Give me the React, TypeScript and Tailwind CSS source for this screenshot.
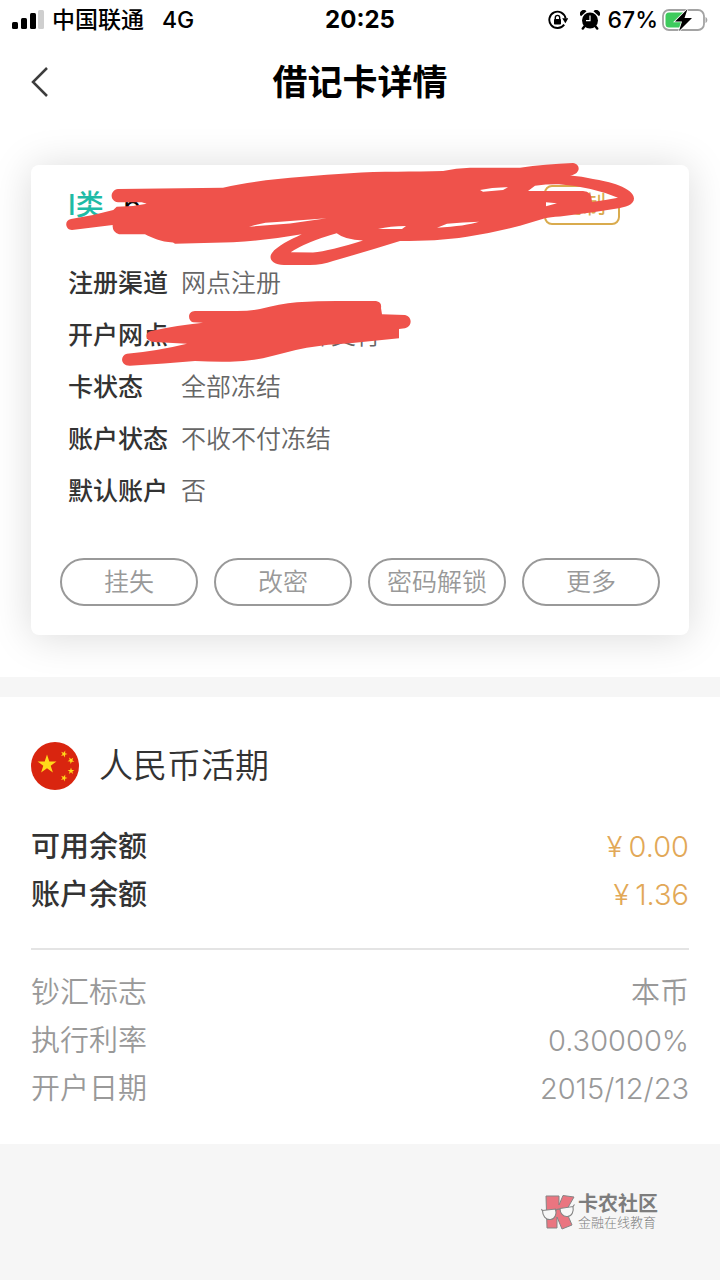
const cardInfo = [
  { label: "注册渠道", value: "网点注册" },
  { label: "开户网点", value: "　　　　　部支行" },
  { label: "卡状态", value: "全部冻结" },
  { label: "账户状态", value: "不收不付冻结" },
  { label: "默认账户", value: "否" },
];

const actions = ["挂失", "改密", "密码解锁", "更多"];

const balances = [
  { label: "可用余额", value: "0.00" },
  { label: "账户余额", value: "1.36" },
];

const details = [
  { label: "钞汇标志", value: "本币" },
  { label: "执行利率", value: "0.30000%" },
  { label: "开户日期", value: "2015/12/23" },
];

function SignalIcon() {
  return (
    <svg className="w-8 h-5" viewBox="0 0 32 20" aria-hidden="true">
      <rect x="0" y="12" width="6" height="7" rx="1.5" />
      <rect x="9" y="8" width="6" height="11" rx="1.5" />
      <rect x="18" y="3" width="6" height="16" rx="1.5" />
      <rect x="26" y="0" width="6" height="19" rx="1.5" fill="#cfcfcf" />
    </svg>
  );
}

function RotationLockIcon() {
  return (
    <svg className="w-5 h-5" viewBox="0 0 20 20" aria-hidden="true">
      <path d="M16.2 14.6A8.2 8.2 0 1 1 17.6 8.5" fill="none" stroke="black" strokeWidth="1.9" />
      <path d="M14.2 8.2h6.2l-3 5z" />
      <rect x="6" y="9" width="7" height="5.5" rx="0.8" />
      <path d="M7.3 9.5V7.6a2.2 2.2 0 0 1 4.4 0v1.9" fill="none" stroke="black" strokeWidth="1.4" />
    </svg>
  );
}

function AlarmIcon() {
  return (
    <svg className="w-5 h-5" viewBox="0 0 20 20" aria-hidden="true">
      <circle cx="10" cy="10.5" r="8" />
      <path d="M1 6.2a3.7 3.7 0 0 1 5.5-5zM19 6.2a3.7 3.7 0 0 0-5.5-5z" />
      <path d="M4.8 16l-2 2.6M15.2 16l2 2.6" stroke="black" strokeWidth="2.4" strokeLinecap="round" />
      <path d="M10 5.5v5.2H6" fill="none" stroke="white" strokeWidth="1.2" />
    </svg>
  );
}

function BatteryIcon() {
  return (
    <svg className="w-[46px] h-6" viewBox="0 0 46 24" aria-hidden="true">
      <rect x="1" y="2" width="41" height="20" rx="6" fill="white" stroke="#a3a3a3" strokeWidth="1.8" />
      <path d="M43.5 9c2.4.8 2.4 5.2 0 6z" fill="#a3a3a3" />
      <path d="M7 4.5h14v15H7a3.5 3.5 0 0 1-3.5-3.5V8A3.5 3.5 0 0 1 7 4.5z" fill="#3ecb5d" />
      <path d="M25.5 1L13 13.5h7L17 23l13-13h-7.5z" fill="black" stroke="white" strokeWidth="1.6" paintOrder="stroke" />
    </svg>
  );
}

function FlagIcon() {
  const star = "M0-10L2.3-3.1H9.5L3.7 1.2 5.9 8.1 0 3.8-5.9 8.1-3.7 1.2-9.5-3.1H-2.3z";
  return (
    <svg className="w-12 h-12 shrink-0" viewBox="0 0 48 48" aria-hidden="true">
      <circle cx="24" cy="24" r="24" fill="#d9250f" />
      <g fill="#ffd91a">
        <path d={star} transform="translate(16 22.5)" />
        <path d={star} transform="translate(33 12) rotate(20) scale(.36)" />
        <path d={star} transform="translate(40 18.5) rotate(40) scale(.36)" />
        <path d={star} transform="translate(40 29) scale(.36)" />
        <path d={star} transform="translate(33 36) rotate(20) scale(.36)" />
      </g>
    </svg>
  );
}

function BrandIcon() {
  return (
    <svg className="w-9 h-9" viewBox="0 0 36 36" aria-hidden="true">
      <g fill="#ea7580" stroke="#858585" strokeWidth="1" strokeLinejoin="round">
        <path d="M5 2h13v9l4-9.5 11 1.5-8 14 6 14-10 4-5-12v11H6z" />
      </g>
      <g fill="#f7f7f7" stroke="#858585" strokeWidth="1.1">
        <path d="M1.5 16.5l13-1.5c1.5 5-.5 10-5 10.5-5 .5-8-4-8-9z" />
        <path d="M19 14.5l13-2c1 5-1 9.5-5.5 10-4.5.5-7.5-3.5-7.5-8z" />
        <path d="M14.5 16.5q2-2 4.5-1M1.5 17L.5 15M32 12.5l1.5-2" fill="none" />
      </g>
    </svg>
  );
}

// Red marker strokes that hide the card number and the branch name
function MarkerStrokes() {
  return (
    <svg
      className="absolute left-0 top-0 w-full overflow-visible pointer-events-none"
      viewBox="31 165 658 470"
      fill="#ef524b"
      fillRule="evenodd"
      aria-hidden="true"
    >
      <path
        d="M118 202.3C109 201 110 190 118 189L223 187.7C260 179 310 176 350 173.3C380 171 415 172 443 171Q456 168 470 167.7H520Q545 164 573 163C581 164 581 174 570 175.5Q582 176 593 179C608 181 634 188 634 198.5C634 205 625 207 617 208.5L593 212.3L560 216.5Q550 217 545 218.3L520 225.7Q493 233 467 236.7C445 240 425 241 400 241Q368 251 333 261Q322 265 310 265H284C272 265 268 258 272 253C277 246 290 240 301.7 234.3Q270 240 233 242.3L175 243.7L173 242.5C160 242 153 238 145 234.3H119Q112 232 112.7 225L72 230C65 230 64 220 71 219Q92 216 113.3 210L116.7 206.7L133 206L146.7 203.7L141.7 202.3Z
        M249 226.7Q263 222 277 222L326.7 218.3Q308 221 290 223.5Z
        M290.7 252.3Q306 242 336.7 233.3Q345 240 363 240.5Q330 251 313 252.5Z
        M480 190Q493 187 508 187.3L503 190L483 191.7Z
        M528 191L535 185.7Q548 184 559 184.3Q592 187 618 197.7Q606 200 592 202Q592 191 583 191Z
        M546 202.3L557 203.3L546 206.3Z
        M378 229Q390 226 406 226L402 229Z
        M437 227.7L447 223.7Q463 222 479 221.7Q466 226 437 227.7Z"
      />
      <path d="M193 322.3C187 320 188 311 195 311H237Q250 311 260 309C273 306 285 303 297 302.3Q318 301 337 301H376Q382 302 381 308L382 314.3L405 315C413 317 412 327 405 328.3L399 329V338.3L350 343.3Q328 344 306.7 347.7C292 350 278 355 263 358.3Q248 361 230 361.7Q212 362 195 361L164 363.5L130 365.7C120 366 120 355 127 353.7Q157 351 187 343.7L154 342C144 341 145 332 151 331Q178 325 203 322.7Z" />
    </svg>
  );
}

function StatusBar() {
  return (
    <div className="h-10 px-3 flex items-center text-[23px] font-medium text-black">
      <div className="flex-1 flex items-center">
        <SignalIcon />
        <span className="ml-2">中国联通</span>
        <span className="ml-[18px]">4G</span>
      </div>
      <time className="text-2xl font-bold">20:25</time>
      <div className="flex-1 flex items-center justify-end">
        <RotationLockIcon />
        <span className="ml-3">
          <AlarmIcon />
        </span>
        <span className="ml-2 mr-1">67%</span>
        <BatteryIcon />
      </div>
    </div>
  );
}

export default function App() {
  return (
    <div className="min-h-screen flex flex-col bg-[#f6f6f6] font-[Inter,'Noto_Sans_CJK_SC',sans-serif] text-[#333333]">
      <div className="bg-white">
        <StatusBar />

        {/* Title bar */}
        <header className="h-[84px] px-[30px] flex items-center">
          <div className="flex-1 flex">
            <button aria-label="返回">
              <svg className="w-5 h-8" viewBox="0 0 20 32" fill="none" stroke="#3d3d3d" strokeWidth="2.5" aria-hidden="true">
                <path d="M17 2L3 16l14 14" />
              </svg>
            </button>
          </div>
          <h1 className="text-[35px] leading-[48px] font-bold text-black">借记卡详情</h1>
          <div className="flex-1" />
        </header>

        <main>
          {/* Card */}
          <section className="relative mx-[31px] mt-[41px] mb-[42px] px-[29px] pt-5 pb-[29px] rounded-lg bg-white shadow-[0_2px_40px_rgba(0,0,0,0.15)]">
            <div className="h-[72px] px-2 pr-10 flex items-start">
              <span className="text-[28px] leading-10 font-medium text-[#1fbba6]">I类</span>
              <span className="ml-5 text-[28px] leading-10 text-black">6</span>
              <button className="ml-auto w-[76px] h-10 rounded-lg border-2 border-[#d9ab4e] text-2xl text-[#d9ab4e]">
                复制
              </button>
            </div>

            <dl className="pl-2">
              {cardInfo.map((row) => (
                <div key={row.label} className="h-[52px] pt-0.5 flex items-center text-[25px]">
                  <dt className="w-[113px] font-medium">{row.label}</dt>
                  <dd className="font-[350] whitespace-pre text-[#666666]">{row.value}</dd>
                </div>
              ))}
            </dl>

            <div className="mt-[41px] grid grid-cols-4 gap-4">
              {actions.map((name) => (
                <button
                  key={name}
                  className="h-12 pt-0.5 rounded-full border-2 border-[#999999] text-[25px] font-[350] text-[#999999] whitespace-nowrap"
                >
                  {name}
                </button>
              ))}
            </div>

            <MarkerStrokes />
          </section>

          <div className="h-5 bg-[#f6f6f6]" />

          {/* Account */}
          <section className="px-[31px] pt-[45px] pb-8">
            <div className="flex items-center gap-5">
              <FlagIcon />
              <h2 className="text-[34px] leading-[48px] font-[350]">人民币活期</h2>
            </div>

            <dl className="mt-8 pb-[30px] border-b-2 border-[#e4e4e4]">
              {balances.map((row) => (
                <div key={row.label} className="h-12 pt-0.5 flex items-center justify-between text-[29px]">
                  <dt className="font-medium">{row.label}</dt>
                  <dd className="flex gap-1.5 font-[350] text-[#e2a857]">
                    <span>¥</span>
                    <span>{row.value}</span>
                  </dd>
                </div>
              ))}
            </dl>

            <dl className="mt-[18px]">
              {details.map((row) => (
                <div
                  key={row.label}
                  className="h-12 pt-0.5 flex items-center justify-between text-[29px] font-[350] text-[#999999]"
                >
                  <dt>{row.label}</dt>
                  <dd>{row.value}</dd>
                </div>
              ))}
            </dl>
          </section>
        </main>
      </div>

      <footer className="flex-1 px-[62px] pb-[50px] flex items-end justify-end">
        <div className="flex items-center gap-px text-[#7d7d7d]">
          <BrandIcon />
          <div>
            <p className="text-xl leading-5 font-bold">卡农社区</p>
            <p className="text-[13px] leading-4 font-light">金融在线教育</p>
          </div>
        </div>
      </footer>
    </div>
  );
}
